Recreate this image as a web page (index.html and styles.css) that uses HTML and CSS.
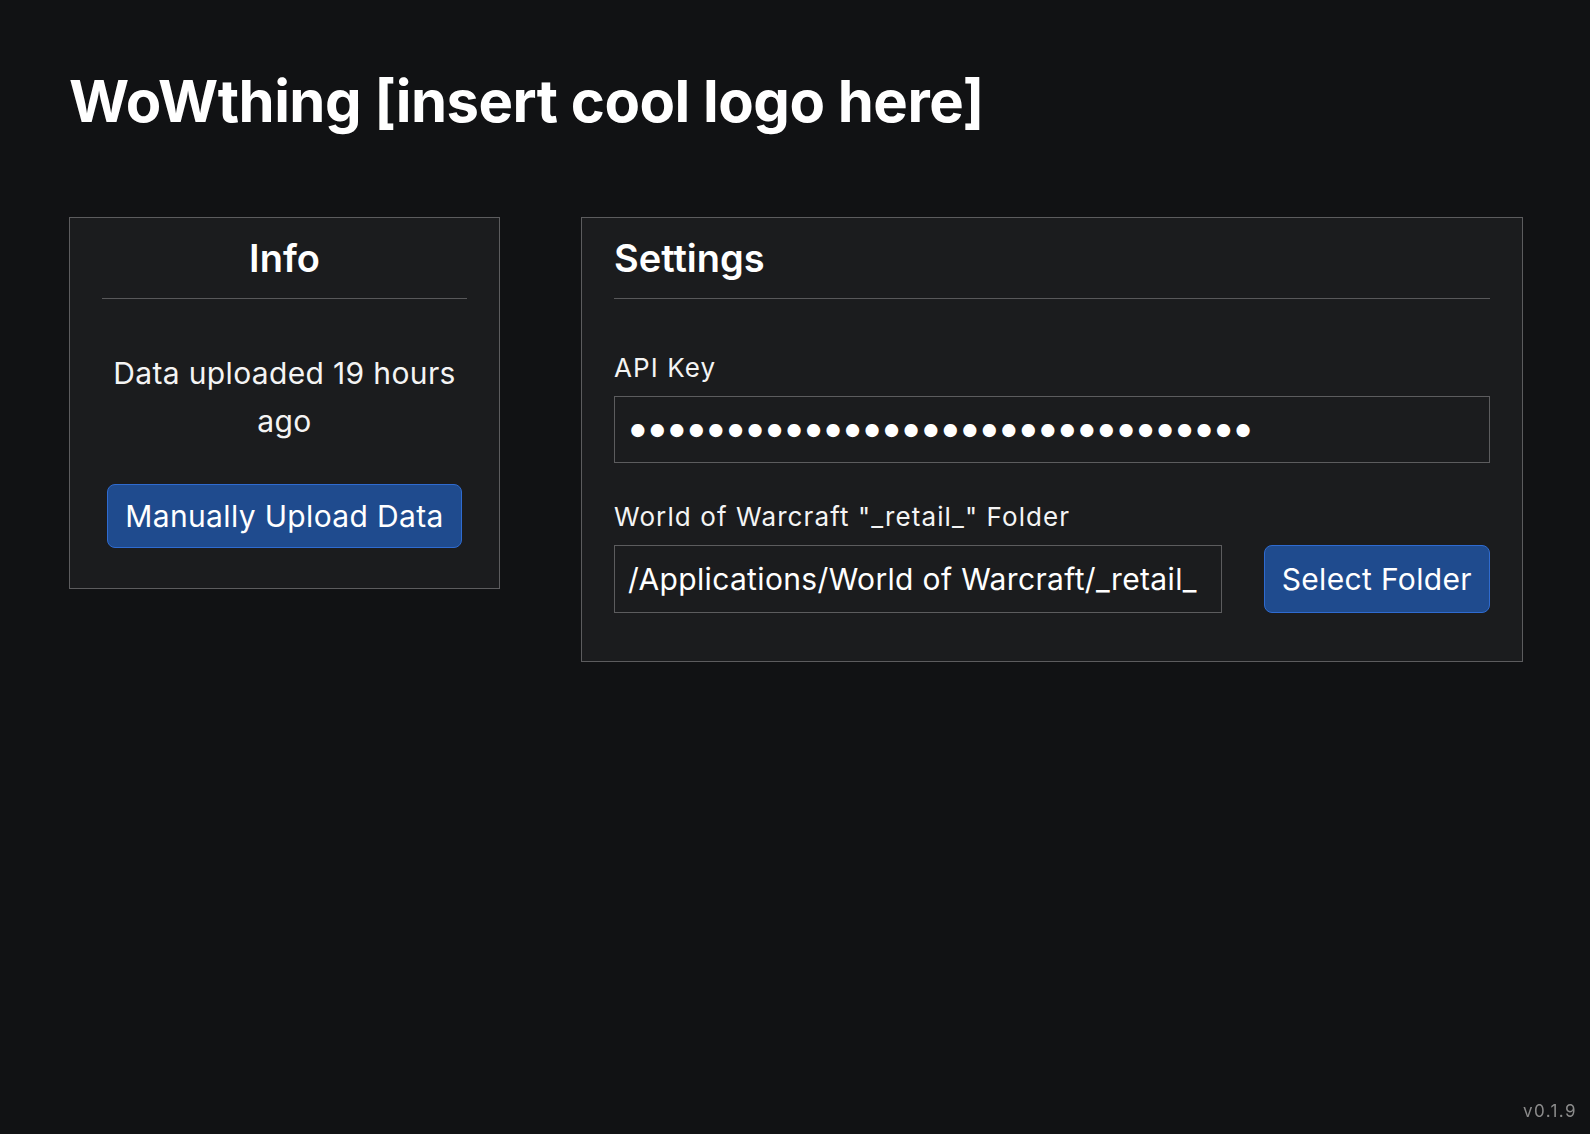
FILE: index.html
```html
<!DOCTYPE html>
<html lang="en">
<head>
<meta charset="utf-8">
<title>WoWthing</title>
<link rel="stylesheet" href="styles.css">
</head>
<body>
<main class="app">
  <h1 class="app-title">WoWthing [insert cool logo here]</h1>
  <div class="columns">
    <section class="card card-info">
      <h2 class="card-title">Info</h2>
      <p class="info-text">Data uploaded 19 hours ago</p>
      <div class="info-actions">
        <button class="btn" type="button">Manually Upload Data</button>
      </div>
    </section>
    <section class="card card-settings">
      <h2 class="card-title">Settings</h2>
      <div class="field field-first">
        <label class="field-label" for="api-key">API Key</label>
        <input class="field-input field-password" id="api-key" type="password" value="abcdefghijklmnopqrstuvwxyz012345" readonly>
      </div>
      <div class="field">
        <label class="field-label" for="folder">World of Warcraft "_retail_" Folder</label>
        <div class="field-row">
          <input class="field-input field-input-row" id="folder" type="text" value="/Applications/World of Warcraft/_retail_" readonly>
          <button class="btn btn-row" type="button">Select Folder</button>
        </div>
      </div>
    </section>
  </div>
</main>
<div class="version">v0.1.9</div>
</body>
</html>
```

FILE: styles.css
```css
* { box-sizing: border-box; }

html, body {
  margin: 0;
  padding: 0;
  background: #111214;
  color: #ffffff;
  font-family: Inter, "Noto Sans", "Liberation Sans", sans-serif;
  height: 100%;
}

.app {
  padding: 0 67px 0 69px;
}

.app-title {
  margin: 67px 0 0 0;
  font-size: 58px;
  line-height: 1.2;
  font-weight: 700;
  letter-spacing: -0.5px;
}

.columns {
  margin-top: 80px;
  display: grid;
  grid-template-columns: 431px 1fr;
  column-gap: 81px;
  align-items: start;
}

.card {
  background: #1b1c1e;
  border: 1px solid #5c5c5e;
  padding: 17px 32px 32px 32px;
}

.card-title {
  margin: 0;
  font-size: 38px;
  line-height: 46px;
  font-weight: 600;
  padding-bottom: 17px;
  border-bottom: 1px solid #58585a;
}

.card-info .card-title { text-align: center; }

.info-text {
  margin: 50px 0 0 0;
  font-size: 30px;
  line-height: 48px;
  letter-spacing: 0.35px;
  text-align: center;
  color: #f4f4f4;
}

.info-actions {
  margin-top: 39px;
  margin-bottom: 8px;
  display: flex;
  justify-content: center;
}

.btn {
  font-family: inherit;
  font-size: 30px;
  line-height: 36px;
  letter-spacing: 0.35px;
  color: #ffffff;
  background: #1f4b8e;
  border: 1px solid #2f6bd0;
  border-radius: 8px;
  padding: 13px 17px;
  height: 64px;
}

.field { margin-bottom: 16px; }
.field-first { margin-top: 54px; }
.field + .field { margin-top: 39px; }

.field-label {
  display: block;
  font-size: 26px;
  line-height: 30px;
  letter-spacing: 1.1px;
  margin-bottom: 13px;
  color: #f4f4f4;
}

.field-input {
  display: block;
  width: 100%;
  height: 67px;
  background: #1b1c1e;
  border: 1px solid #5c5c5e;
  border-radius: 0;
  color: #ffffff;
  font-family: inherit;
  font-size: 30px;
  letter-spacing: 0.35px;
  padding: 0 13px;
  outline: none;
}

.field-password {
  font-size: 42px;
  letter-spacing: -4.1px;
  padding: 0 10px 4px 11px;
}

.field-row {
  display: flex;
  gap: 42px;
  align-items: stretch;
}

.field-input-row {
  flex: 1;
  height: 68px;
  min-width: 0;
}

.btn-row {
  height: 68px;
  flex: none;
}

.version {
  position: fixed;
  right: 13px;
  bottom: 13px;
  font-size: 17px;
  letter-spacing: 1.4px;
  color: #8b8b8b;
}
```
